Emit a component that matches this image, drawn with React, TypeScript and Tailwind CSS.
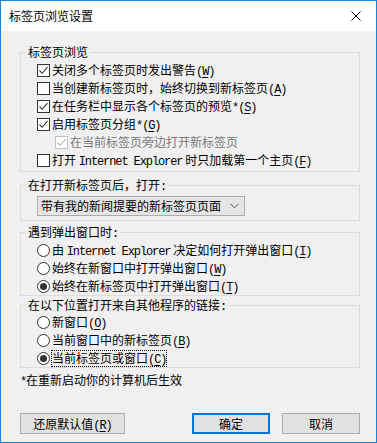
import type { ReactNode } from "react";

const CJK = "font-['Noto_Sans_CJK_SC','Noto_Sans',sans-serif]";

// half-width latin bits (brackets, access keys, product name) look like SimSun's 6px cells
function L({ children }: { children: ReactNode }) {
  return (
    <span className="font-['Liberation_Mono',monospace] text-[12px] leading-none tracking-[-1.1px]">
      {children}
    </span>
  );
}

function Key({ k }: { k: string }) {
  return (
    <L>
      (<span className="underline underline-offset-2">{k}</span>)
    </L>
  );
}

function Check({ checked, disabled }: { checked?: boolean; disabled?: boolean }) {
  return (
    <span
      className={`flex h-[13px] w-[13px] shrink-0 items-center justify-center border bg-white ${
        disabled ? "border-[#c5c5c5]" : "border-[#333333]"
      }`}
    >
      {checked && (
        <svg width="11" height="11" viewBox="0 0 11 11">
          <path
            d="M1.5 5.5 L4.2 8.3 L9.5 2.2"
            fill="none"
            stroke={disabled ? "#b5b5b5" : "#333333"}
            strokeWidth="1.1"
          />
        </svg>
      )}
    </span>
  );
}

function Radio({ on }: { on?: boolean }) {
  return (
    <span className="flex h-[13px] w-[13px] shrink-0 items-center justify-center rounded-full border border-[#333333] bg-white">
      {on && <span className="h-[7px] w-[7px] rounded-full bg-[#333333]" />}
    </span>
  );
}

function Group({ title, children, className = "" }: { title: ReactNode; children: ReactNode; className?: string }) {
  return (
    <fieldset className={`min-w-0 border border-[#dcdcdc] ${className}`}>
      <legend className="ml-[5px] h-[16px] px-[2px] leading-[16px]">{title}</legend>
      <div className="pl-[16px]">{children}</div>
    </fieldset>
  );
}

function Row({ children, indent = false }: { children: ReactNode; indent?: boolean }) {
  return (
    <div className={`flex h-[18px] items-center gap-[2px] leading-[16px] ${indent ? "pl-[18px]" : ""}`}>
      {children}
    </div>
  );
}

export default function App() {
  return (
    <div className={`flex h-[443px] w-[377px] flex-col overflow-hidden border border-[#1883d7] bg-[#f0f0f0] text-[12px] text-black ${CJK}`}>
      {/* title bar */}
      <div className="flex h-[30px] shrink-0 items-center justify-between bg-white pl-[8px] pr-[15px]">
        <span className="leading-[16px]">标签页浏览设置</span>
        <svg width="10" height="10" viewBox="0 0 10 10">
          <path d="M0.5 0.5 L9.5 9.5 M9.5 0.5 L0.5 9.5" stroke="#111" strokeWidth="1" />
        </svg>
      </div>

      <div className="flex flex-1 flex-col pl-[19px] pr-[16px]">
        <Group title="标签页浏览" className="mt-[13px] pb-[2px] pt-[1px]">
          <Row>
            <Check checked />
            <span>
              关闭多个标签页时发出警告<Key k="W" />
            </span>
          </Row>
          <Row>
            <Check />
            <span>
              当创建新标签页时，始终切换到新标签页<Key k="A" />
            </span>
          </Row>
          <Row>
            <Check checked />
            <span>
              在任务栏中显示各个标签页的预览<L>*</L>
              <Key k="S" />
            </span>
          </Row>
          <Row>
            <Check checked />
            <span>
              启用标签页分组<L>*</L>
              <Key k="G" />
            </span>
          </Row>
          <Row indent>
            <Check checked disabled />
            <span className="text-[#7a7a7a]">在当前标签页旁边打开新标签页</span>
          </Row>
          <Row>
            <Check />
            <span>
              打开 <L>Internet Explorer</L> 时只加载第一个主页<Key k="F" />
            </span>
          </Row>
        </Group>

        <Group
          title={
            <>
              在打开新标签页后，打开<L>:</L>
            </>
          }
          className="mt-[5px] pb-[4px]"
        >
          <div className="mt-[3px] flex h-[20px] w-[208px] items-center justify-between border border-[#adadad] bg-[#e5e5e5] pl-[3px] pr-[5px]">
            <span className="leading-[16px]">带有我的新闻提要的新标签页页面</span>
            <svg width="9" height="6" viewBox="0 0 9 6">
              <path d="M0.5 0.8 L4.5 4.8 L8.5 0.8" fill="none" stroke="#555" strokeWidth="1" />
            </svg>
          </div>
        </Group>

        <Group
          title={
            <>
              遇到弹出窗口时<L>:</L>
            </>
          }
          className="mt-[3px] pt-[1px]"
        >
          <Row>
            <Radio />
            <span>
              由 <L>Internet Explorer</L> 决定如何打开弹出窗口<Key k="I" />
            </span>
          </Row>
          <Row>
            <Radio />
            <span>
              始终在新窗口中打开弹出窗口<Key k="W" />
            </span>
          </Row>
          <Row>
            <Radio on />
            <span>
              始终在新标签页中打开弹出窗口<Key k="T" />
            </span>
          </Row>
        </Group>

        <Group
          title={
            <>
              在以下位置打开来自其他程序的链接<L>:</L>
            </>
          }
          className="mt-[1px]"
        >
          <Row>
            <Radio />
            <span>
              新窗口<Key k="O" />
            </span>
          </Row>
          <Row>
            <Radio />
            <span>
              当前窗口中的新标签页<Key k="B" />
            </span>
          </Row>
          <Row>
            <Radio on />
            <span className="leading-[14px] outline outline-1 outline-dotted outline-black">
              当前标签页或窗口<Key k="C" />
            </span>
          </Row>
        </Group>

        <p className="mt-[4px] h-[16px] leading-[16px]">
          <L>*</L>在重新启动你的计算机后生效
        </p>

        <div className="mt-[25px] flex items-center">
          <button className="flex h-[21px] w-[105px] items-center justify-center border border-[#adadad] bg-[#e1e1e1] leading-[16px]">
            <span>
              还原默认值<Key k="R" />
            </span>
          </button>
          <div className="ml-auto flex gap-[12px]">
            <button className="flex h-[21px] w-[78px] items-center justify-center border-2 border-[#0078d7] bg-[#e1e1e1] leading-[16px]">
              确定
            </button>
            <button className="flex h-[21px] w-[78px] items-center justify-center border border-[#adadad] bg-[#e1e1e1] leading-[16px]">
              取消
            </button>
          </div>
        </div>
      </div>
    </div>
  );
}
